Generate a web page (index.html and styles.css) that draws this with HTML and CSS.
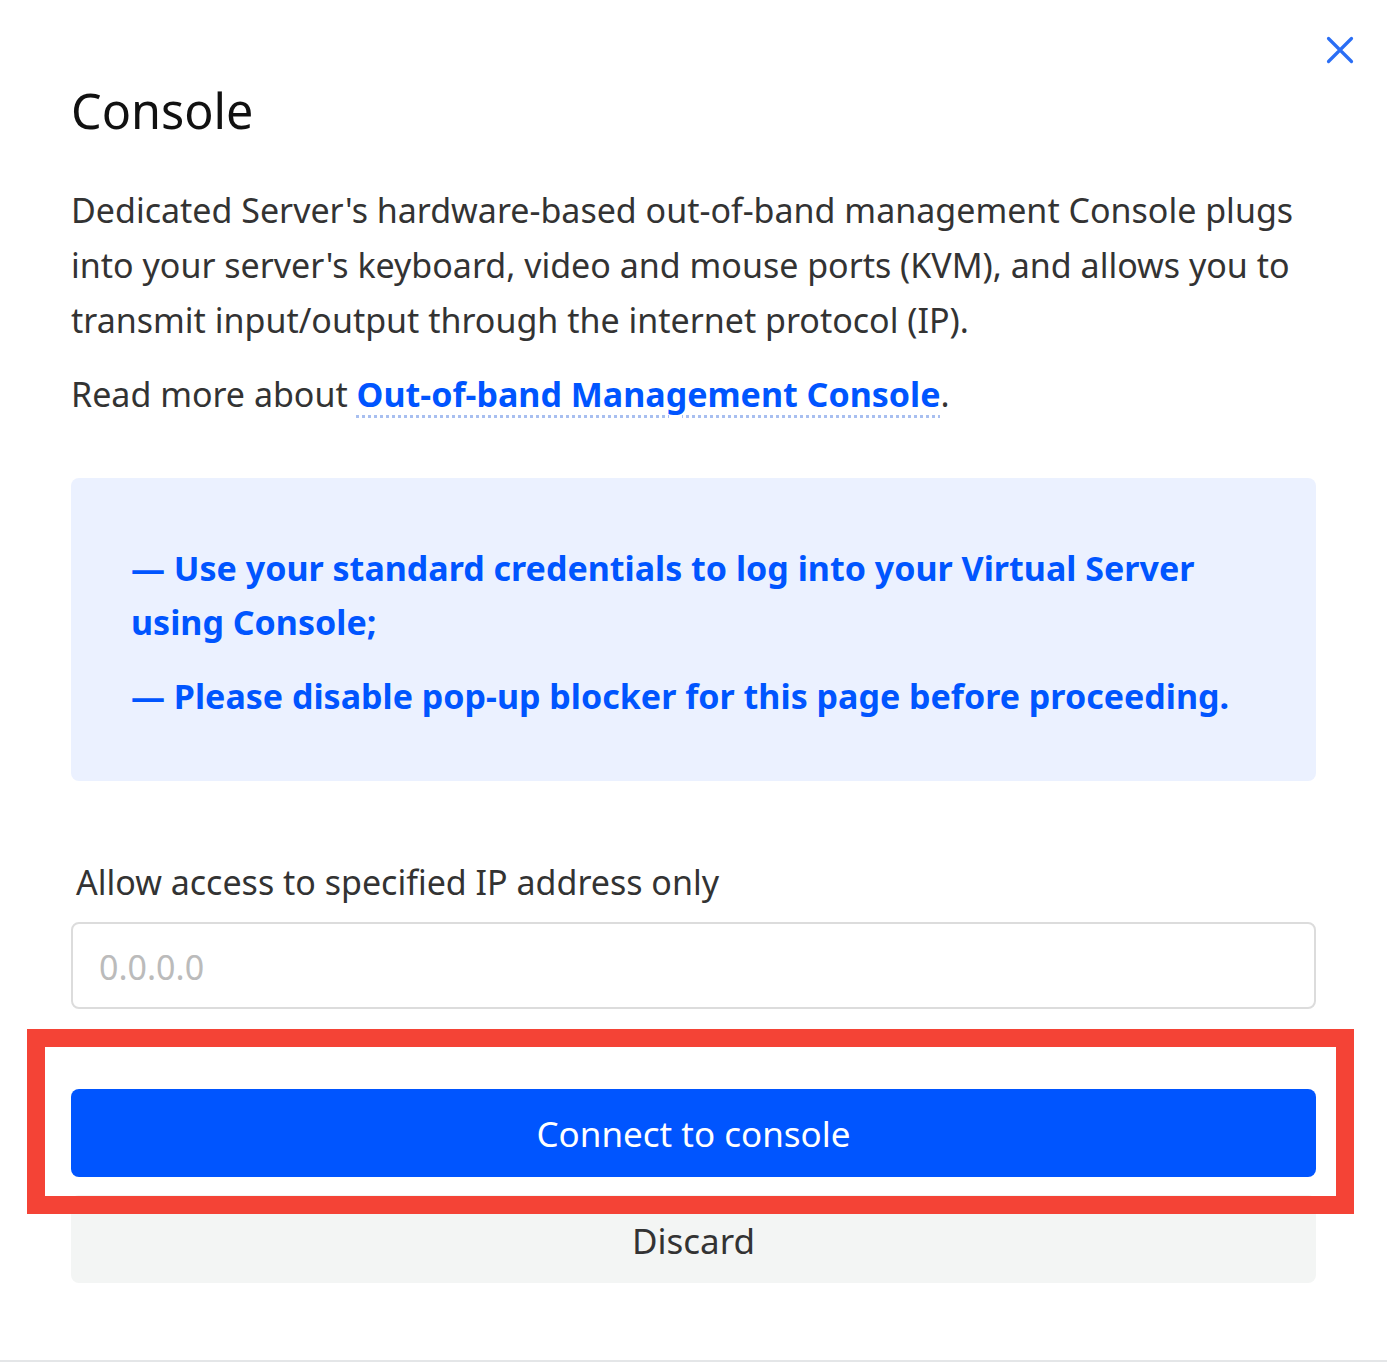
FILE: index.html
```html
<!DOCTYPE html>
<html>
<head>
<meta charset="utf-8">
<link rel="stylesheet" href="styles.css">
</head>
<body>
<div class="modal">
  <button class="close" aria-label="Close">
    <svg width="30" height="30" viewBox="0 0 30 30"><path d="M3.5 3.5 L26.5 26.5 M26.5 3.5 L3.5 26.5" stroke="#2a6ef5" stroke-width="3.2" stroke-linecap="round"/></svg>
  </button>
  <h1 class="title">Console</h1>
  <p class="text">Dedicated Server's hardware-based out-of-band management Console plugs into your server's keyboard, video and mouse ports (KVM), and allows you to transmit input/output through the internet protocol (IP).</p>
  <p class="text">Read more about <a class="link" href="#">Out-of-band Management Console</a>.</p>
  <div class="info">
    <p class="info-line">— Use your standard credentials to log into your Virtual Server using Console;</p>
    <p class="info-line">— Please disable pop-up blocker for this page before proceeding.</p>
  </div>
  <label class="label">Allow access to specified IP address only</label>
  <input class="input" type="text" placeholder="0.0.0.0">
  <div class="actions">
    <button class="btn btn-primary">Connect to console</button>
    <button class="btn btn-secondary">Discard</button>
    <div class="highlight"></div>
  </div>
</div>
</body>
</html>
```

FILE: styles.css
```css
* { box-sizing: border-box; }
html, body { margin: 0; padding: 0; background: #fff; }
body {
  font-family: "Noto Sans", "Open Sans", sans-serif;
  height: 1362px;
  border-bottom: 2px solid #e4e6e8;
}
.modal {
  position: relative;
  padding: 80px 71px 0 71px;
}
.close {
  position: absolute;
  top: 35px;
  right: 32px;
  background: none;
  border: 0;
  padding: 0;
  width: 30px;
  height: 30px;
  cursor: pointer;
}
.close svg { display: block; }
.title {
  margin: 0 0 43px 0;
  font-size: 48.5px;
  font-weight: 400;
  line-height: 60px;
  color: #111;
}
.text {
  margin: 0 0 19px 0;
  font-size: 34px;
  line-height: 55px;
  color: #333;
}
.link {
  color: #0055ff;
  font-weight: 700;
  text-decoration: underline dotted #a8bff0;
  text-decoration-thickness: 3px;
  text-underline-offset: 8px;
}
.info {
  margin-top: 56px;
  background: #ebf1ff;
  border-radius: 8px;
  padding: 63px 60px 58px 60px;
}
.info-line {
  margin: 0;
  font-size: 34px;
  line-height: 54px;
  font-weight: 700;
  color: #0055ff;
}
.info-line + .info-line { margin-top: 20px; }
.label {
  display: block;
  margin-top: 74px;
  padding-left: 5px;
  font-size: 34px;
  line-height: 54px;
  color: #333;
}
.input {
  display: block;
  width: 100%;
  height: 87px;
  margin-top: 13px;
  border: 2px solid #dcdcdc;
  border-radius: 8px;
  padding: 2px 26px 0 26px;
  font-family: inherit;
  font-size: 34px;
  color: #333;
  outline: none;
}
.input::placeholder { color: #bbb; }
.actions {
  position: relative;
  margin-top: 80px;
  display: flex;
  flex-direction: column;
  gap: 18px;
}
.btn {
  display: block;
  width: 100%;
  height: 88px;
  border: 0;
  border-radius: 8px;
  font-family: inherit;
  font-size: 35px;
  cursor: pointer;
}
.btn-primary { background: #0055ff; color: #fff; }
.btn-secondary { background: #f3f5f4; color: #333; padding-top: 4px; }
.highlight {
  position: absolute;
  left: -44px;
  right: -38px;
  top: -60px;
  height: 185px;
  border: 18px solid #f44336;
  pointer-events: none;
}
```
